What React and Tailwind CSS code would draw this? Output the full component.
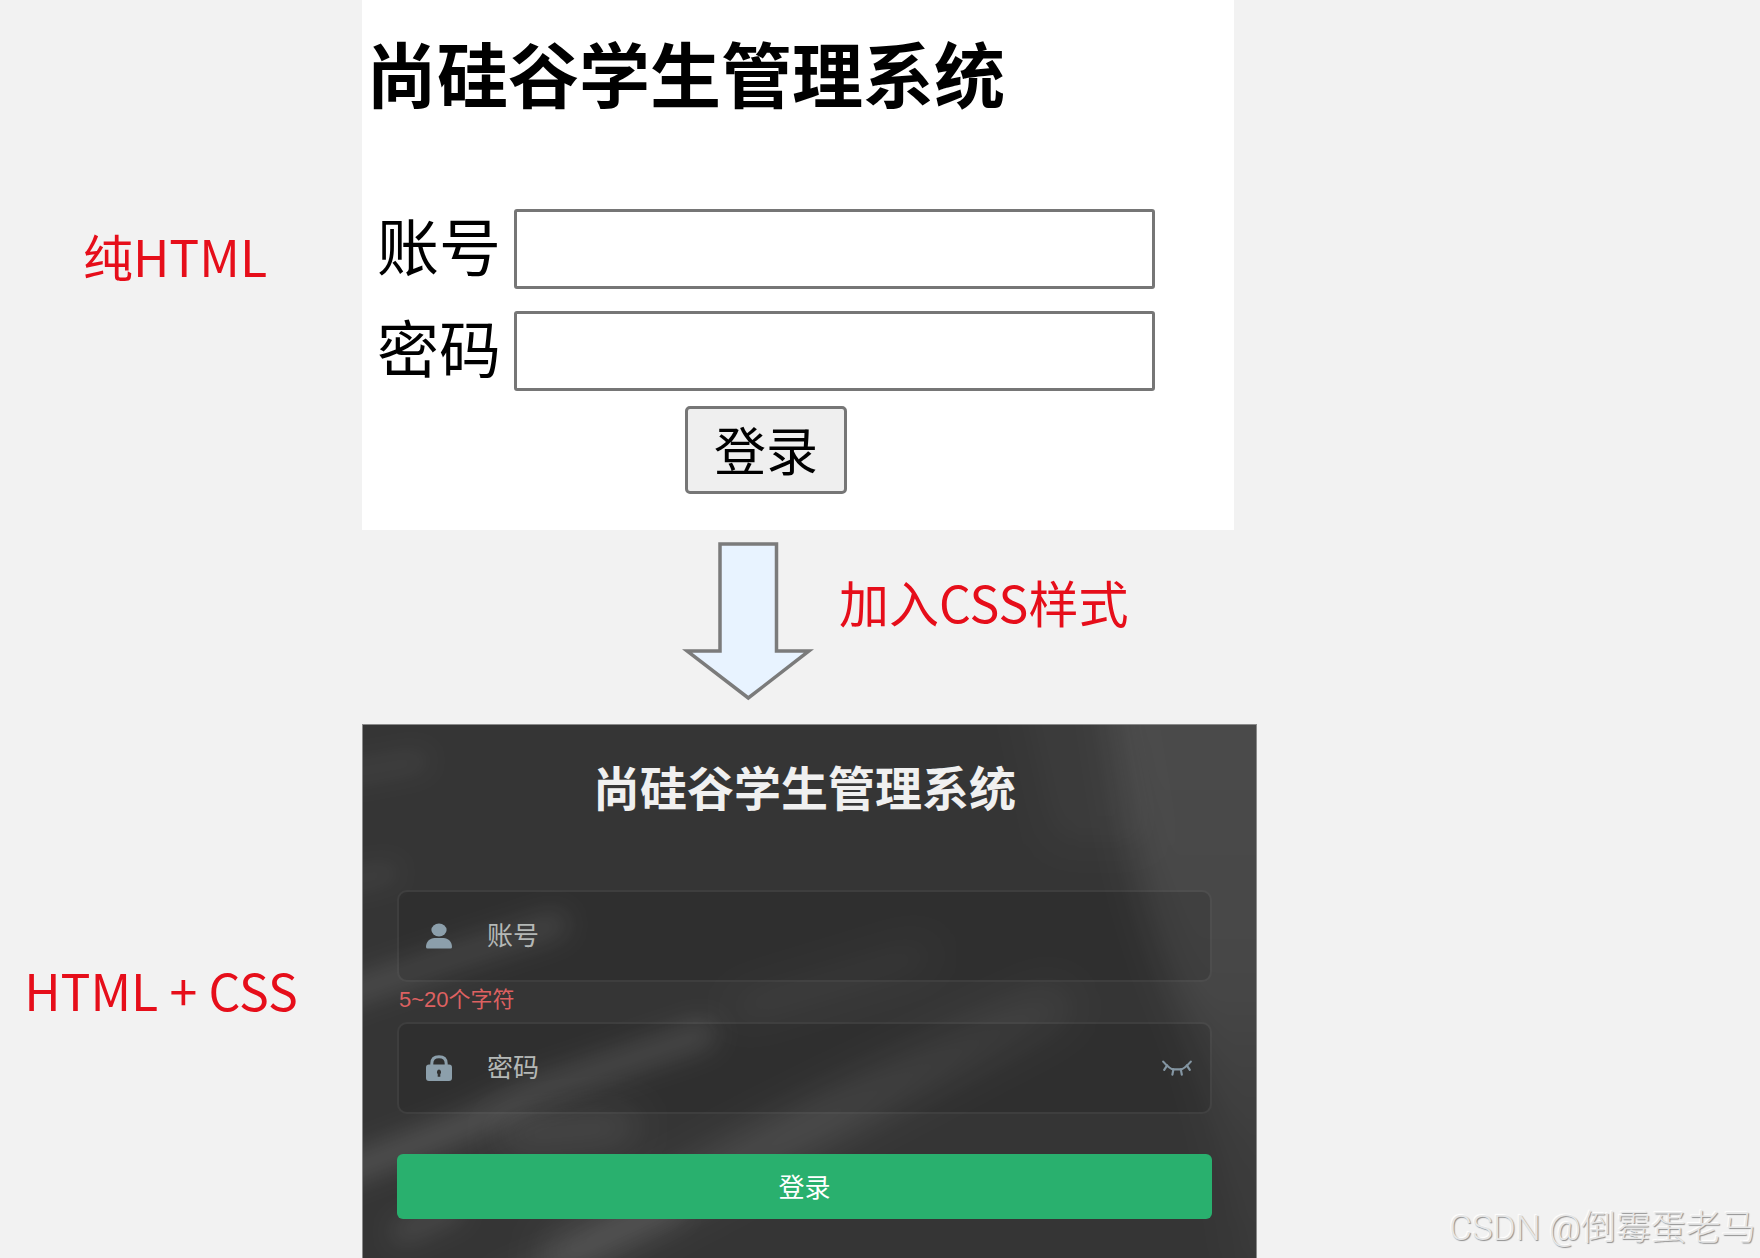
import { useState } from 'react';

function Caption({ className = '', children }) {
  return (
    <p className={`whitespace-nowrap text-[50px] leading-[60px] text-[#e60e1a] ${className}`}>
      {children}
    </p>
  );
}

function PlainField({ id, label, type = 'text' }) {
  return (
    <div className="flex items-start">
      <label htmlFor={id} className="w-[137px] shrink-0 text-[62px] leading-[70px] text-black">
        {label}
      </label>
      <input
        id={id}
        type={type}
        className="h-20 min-w-0 flex-1 rounded-[3px] border-[3px] border-[#767676] bg-white px-3 text-[48px] outline-none"
      />
    </div>
  );
}

function PlainLogin() {
  return (
    <section className="mr-[23px] bg-white pt-[31px] pb-9">
      <h1 className="pl-1 text-[71px] leading-[80px] font-bold text-black">尚硅谷学生管理系统</h1>
      <form className="mt-[98px] pr-[79px] pl-[15px]" onSubmit={(e) => e.preventDefault()}>
        <div className="flex flex-col gap-[22px]">
          <PlainField id="plain-account" label="账号" />
          <PlainField id="plain-password" label="密码" type="password" />
        </div>
        <div className="mt-[15px] flex justify-center">
          <button
            type="submit"
            className="h-[88px] rounded-[5px] border-[3px] border-[#767676] bg-[#efefef] px-[26px] pb-[2px] text-[52px] leading-[80px] text-black"
          >
            登录
          </button>
        </div>
      </form>
    </section>
  );
}

function DownArrow() {
  return (
    <svg width="132" height="160" viewBox="0 0 132 160" aria-hidden="true" className="shrink-0">
      <path
        d="M38 3H94.5V110H127L66.3 157L5 110H38Z"
        fill="#e8f3ff"
        stroke="#7b7b7b"
        strokeWidth="3.5"
      />
    </svg>
  );
}

function Backdrop() {
  return (
    <svg
      className="absolute inset-0 h-full w-full"
      viewBox="0 0 895 534"
      preserveAspectRatio="xMidYMid slice"
      aria-hidden="true"
    >
      <defs>
        <filter id="soft" filterUnits="userSpaceOnUse" x="-100" y="-100" width="1100" height="740">
          <feGaussianBlur stdDeviation="12" />
        </filter>
        <filter id="softer" filterUnits="userSpaceOnUse" x="-100" y="-100" width="1100" height="740">
          <feGaussianBlur stdDeviation="19" />
        </filter>
        <linearGradient id="side" x1="0" y1="0" x2="0" y2="1">
          <stop offset="0" stopColor="#fff" stopOpacity="0.11" />
          <stop offset="0.5" stopColor="#fff" stopOpacity="0.09" />
          <stop offset="0.75" stopColor="#fff" stopOpacity="0.04" />
          <stop offset="1" stopColor="#fff" stopOpacity="0.02" />
        </linearGradient>
        <linearGradient id="fade" gradientUnits="userSpaceOnUse" x1="200" y1="520" x2="740" y2="270">
          <stop offset="0" stopColor="#fff" stopOpacity="0.1" />
          <stop offset="0.5" stopColor="#fff" stopOpacity="0.12" />
          <stop offset="1" stopColor="#fff" stopOpacity="0.04" />
        </linearGradient>
      </defs>
      <rect width="895" height="534" fill="#353535" />
      <path
        d="M740 -80H980V580H880Q860 400 825 300Q785 200 770 120Q755 40 740 -80Z"
        fill="url(#side)"
        filter="url(#softer)"
      />
      <path d="M650 -60H760L790 120H690Z" fill="#fff" fillOpacity="0.03" filter="url(#softer)" />
      <g stroke="#fff" fill="none" strokeLinecap="round" strokeLinejoin="round">
        <path d="M-20 50L56 36" strokeWidth="20" strokeOpacity="0.06" filter="url(#soft)" />
        <path d="M-20 158L26 148" strokeWidth="20" strokeOpacity="0.06" filter="url(#soft)" />
        <path d="M-40 278L80 236L192 200" strokeWidth="26" strokeOpacity="0.11" filter="url(#soft)" />
        <path d="M-40 456L100 402L170 368L340 310" strokeWidth="28" strokeOpacity="0.13" filter="url(#soft)" />
        <path d="M380 284L560 230" strokeWidth="24" strokeOpacity="0.05" filter="url(#softer)" />
        <path d="M150 412L260 402" strokeWidth="30" strokeOpacity="0.11" filter="url(#softer)" />
        <path d="M200 530L400 425L520 365L690 282" strokeWidth="44" stroke="url(#fade)" filter="url(#softer)" />
        <path d="M40 508L90 486" strokeWidth="22" strokeOpacity="0.1" filter="url(#soft)" />
        <path d="M140 560L210 530L310 485" strokeWidth="26" strokeOpacity="0.07" filter="url(#soft)" />
      </g>
    </svg>
  );
}

function UserIcon() {
  return (
    <svg width="26" height="26" viewBox="0 0 26 26" fill="#8c9fab" aria-hidden="true">
      <ellipse cx="13" cy="7" rx="7.6" ry="6.4" />
      <path d="M0 24C0 18.5 4 15 8.5 15H17.5C22 15 26 18.5 26 24Q26 25.5 24.5 25.5H1.5Q0 25.5 0 24Z" />
    </svg>
  );
}

function LockIcon() {
  return (
    <svg width="26" height="26" viewBox="0 0 26 26" aria-hidden="true">
      <path d="M5.8 11V8.5Q5.8 1.8 13 1.8T20.2 8.5V11" fill="none" stroke="#8c9fab" strokeWidth="3" />
      <rect y="9.6" width="26" height="16.4" rx="3" fill="#8c9fab" />
      <path d="M13 14.6A2.6 2.6 0 0 1 14.3 19V21.8H11.7V19A2.6 2.6 0 0 1 13 14.6Z" fill="#303030" />
    </svg>
  );
}

function ClosedEyeIcon() {
  return (
    <svg
      width="30"
      height="16"
      viewBox="0 0 30 16"
      fill="none"
      stroke="#8496a3"
      strokeWidth="2.2"
      strokeLinecap="round"
      aria-hidden="true"
    >
      <path d="M1.2 1.6Q8 9.4 11.8 9.4H18.2Q22 9.4 28.8 1.6" />
      <path d="M5.2 5.4L2.2 9.8M11.4 9.4L10.4 14.6M18.8 9.4L19.8 14.6M24.8 5.4L27.8 9.8" />
    </svg>
  );
}

function DarkField({ id, label, type = 'text', icon, children }) {
  return (
    <div className="flex h-[92px] items-center rounded-[10px] border-2 border-white/7 bg-black/10 pr-[18px] pl-[27px]">
      <label htmlFor={id} className="shrink-0">
        {icon}
      </label>
      <input
        id={id}
        type={type}
        placeholder={label}
        aria-label={label}
        className="ml-[35px] h-10 min-w-0 flex-1 bg-transparent pb-[6px] text-[26px] leading-9 text-white outline-none placeholder:text-[#b4b8b6]"
      />
      {children}
    </div>
  );
}

function StyledLogin() {
  const [visible, setVisible] = useState(false);

  return (
    <section className="relative overflow-hidden border border-b-0 border-[#8a8a8a] bg-[#353535]">
      <Backdrop />
      <div className="relative pt-[31px] pr-11 pb-[38px] pl-[34px]">
        <h2 className="text-center text-[47px] leading-[60px] font-bold text-[#f0f0f0]">
          尚硅谷学生管理系统
        </h2>
        <form className="mt-[74px]" onSubmit={(e) => e.preventDefault()}>
          <DarkField id="account" label="账号" icon={<UserIcon />} />
          <p className="h-10 pl-[2px] font-['Liberation_Sans','Noto_Sans_CJK_SC',sans-serif] text-[22px] leading-9 text-[#dd6161]">
            5~20个字符
          </p>
          <DarkField
            id="password"
            label="密码"
            type={visible ? 'text' : 'password'}
            icon={<LockIcon />}
          >
            <button type="button" aria-label="显示密码" onClick={() => setVisible(!visible)}>
              <ClosedEyeIcon />
            </button>
          </DarkField>
          <button
            type="submit"
            className="mt-10 h-[65px] w-full rounded-[6px] bg-[#29b06e] pb-[2px] text-[26px] leading-9 text-white"
          >
            登录
          </button>
        </form>
      </div>
    </section>
  );
}

export default function App() {
  return (
    <main
      lang="zh-CN"
      className="relative grid min-h-screen grid-cols-[362px_minmax(0,1fr)_503px] grid-rows-[auto_auto_1fr] overflow-hidden bg-[#f2f2f2] font-['Noto_Sans_CJK_SC',sans-serif]"
    >
      <div className="flex items-center justify-center pr-3 pb-5">
        <Caption>纯HTML</Caption>
      </div>
      <PlainLogin />

      <div className="col-start-2 flex items-center pt-[11px] pb-[23px] pl-[320px]">
        <DownArrow />
        <Caption className="ml-[25px] pb-10">加入CSS样式</Caption>
      </div>

      <div className="col-start-1 flex items-center justify-center pr-10 pb-1">
        <Caption>HTML + CSS</Caption>
      </div>
      <StyledLogin />

      <p className="absolute right-1 bottom-1 font-['Roboto','Noto_Sans_CJK_SC',sans-serif] text-[35px] leading-[50px] font-light text-[#e6e6e6] [text-shadow:1px_1px_1px_#8f8f8f,-1px_-1px_1px_#ffffff]">
        CSDN @倒霉蛋老马
      </p>
    </main>
  );
}
